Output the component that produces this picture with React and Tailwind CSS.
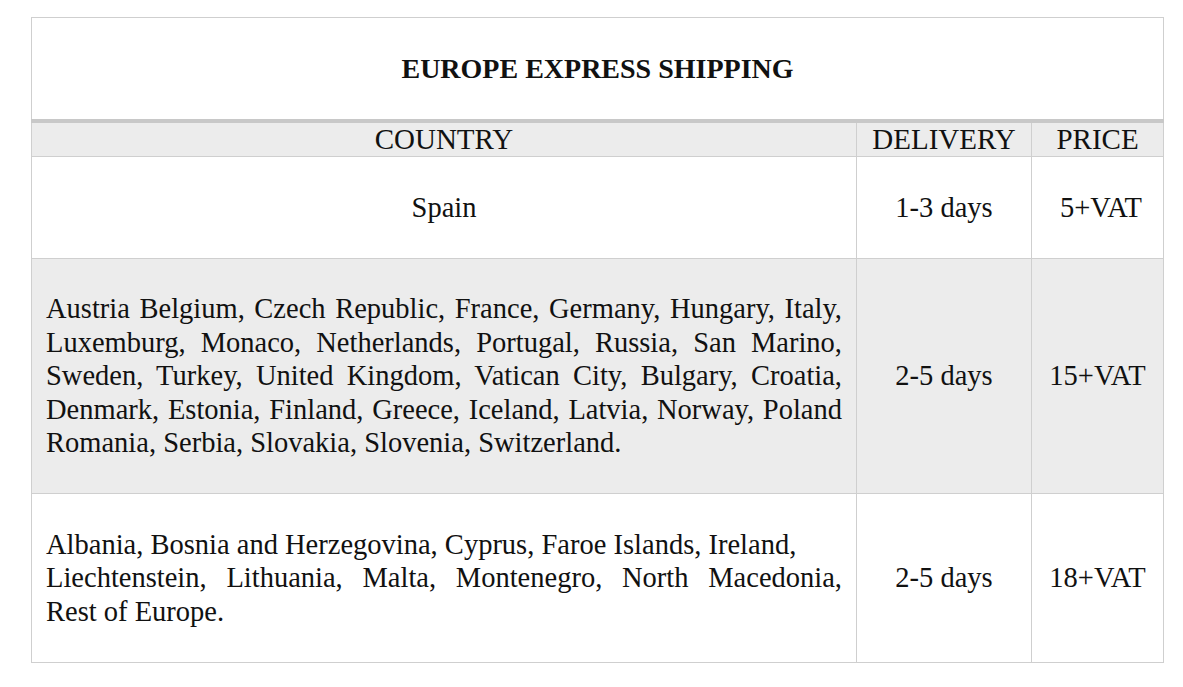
export default function App() {
  const J = "block text-justify [text-align-last:justify]";
  const L = "block text-left";
  return (
    <div className="min-h-[687px] w-[1183px] bg-white pt-[17px] pl-[31px] text-[#111] font-['Liberation_Serif',serif]">
      <table className="table-fixed border-collapse w-[1132px] text-[28.5px] leading-[33.5px]">
        <colgroup>
          <col className="w-[825px]" />
          <col className="w-[175px]" />
          <col className="w-[132px]" />
        </colgroup>
        <tbody>
          <tr className="h-[103px]">
            <td colSpan={3} className="border border-[#cfcfcf] border-b-[4px] border-b-[#c8c8c8] text-center font-bold text-[28px] align-middle">
              EUROPE EXPRESS SHIPPING
            </td>
          </tr>
          <tr className="h-[36px] bg-[#ececec] text-[29px]">
            <td className="border border-[#cfcfcf] text-center align-middle">COUNTRY</td>
            <td className="border border-[#cfcfcf] text-center align-middle">DELIVERY</td>
            <td className="border border-[#cfcfcf] text-center align-middle">PRICE</td>
          </tr>
          <tr className="h-[102px]">
            <td className="border border-[#cfcfcf] text-center align-middle">Spain</td>
            <td className="border border-[#cfcfcf] text-center align-middle">1-3 days</td>
            <td className="border border-[#cfcfcf] text-center align-middle pl-[7px]">5+VAT</td>
          </tr>
          <tr className="h-[235px] bg-[#ececec]">
            <td className="border border-[#cfcfcf] align-middle px-[14px]">
              <span className={J}>Austria Belgium, Czech Republic, France, Germany, Hungary, Italy,</span>
              <span className={J}>Luxemburg, Monaco, Netherlands, Portugal, Russia, San Marino,</span>
              <span className={J}>Sweden, Turkey, United Kingdom, Vatican City, Bulgary, Croatia,</span>
              <span className={J}>Denmark, Estonia, Finland, Greece, Iceland, Latvia, Norway, Poland</span>
              <span className={L}>Romania, Serbia, Slovakia, Slovenia, Switzerland.</span>
            </td>
            <td className="border border-[#cfcfcf] text-center align-middle">2-5 days</td>
            <td className="border border-[#cfcfcf] text-center align-middle">15+VAT</td>
          </tr>
          <tr className="h-[169px]">
            <td className="border border-[#cfcfcf] align-middle px-[14px]">
              <span className={L}>Albania, Bosnia and Herzegovina, Cyprus, Faroe Islands, Ireland,</span>
              <span className={J}>Liechtenstein, Lithuania, Malta, Montenegro, North Macedonia,</span>
              <span className={L}>Rest of Europe.</span>
            </td>
            <td className="border border-[#cfcfcf] text-center align-middle">2-5 days</td>
            <td className="border border-[#cfcfcf] text-center align-middle">18+VAT</td>
          </tr>
        </tbody>
      </table>
    </div>
  );
}
